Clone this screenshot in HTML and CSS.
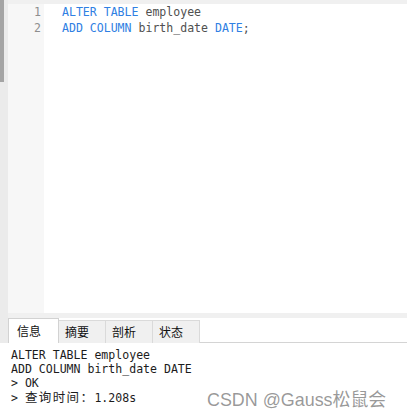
FILE: index.html
```html
<!DOCTYPE html>
<html>
<head>
<meta charset="utf-8">
<link rel="stylesheet" href="styles.css">
</head>
<body>
<div class="upper">
  <div class="vscroll"><div class="thumb"></div></div>
  <div class="pane">
    <div class="topband"></div>
    <div class="editor">
      <div class="gutter">
        <div class="ln">1</div>
        <div class="ln">2</div>
      </div>
      <div class="code">
        <div class="line"><span class="kw">ALTER TABLE</span> employee</div>
        <div class="line"><span class="kw">ADD COLUMN</span> birth_date <span class="kw">DATE</span>;</div>
      </div>
    </div>
    <div class="splitter"></div>
    <div class="tabs">
      <div class="tab active">信息</div>
      <div class="tab">摘要</div>
      <div class="tab">剖析</div>
      <div class="tab">状态</div>
    </div>
  </div>
</div>
<div class="output">
  <div class="oline">ALTER TABLE employee</div>
  <div class="oline">ADD COLUMN birth_date DATE</div>
  <div class="oline">&gt; OK</div>
  <div class="oline">&gt; <span class="cjk">查询时间：</span>1.208s</div>
</div>
<div class="watermark">CSDN @Gauss松鼠会</div>
</body>
</html>
```
FILE: styles.css
```css
html, body {
  margin: 0;
  padding: 0;
  background: #ffffff;
}
body {
  width: 407px;
  height: 419px;
  position: relative;
  overflow: hidden;
  font-family: "DejaVu Sans Mono", "Noto Sans CJK SC", monospace;
}
.upper {
  display: flex;
  height: 343px;
}
.vscroll {
  width: 8px;
  background: #ebebeb;
  flex: none;
}
.thumb {
  width: 4px;
  height: 82px;
  background: #a4a4a4;
}
.pane {
  flex: 1;
  display: flex;
  flex-direction: column;
}
.topband {
  height: 4px;
  background: #f0f0f0;
}
.editor {
  height: 309px;
  display: flex;
  background: #ffffff;
}
.gutter {
  width: 33px;
  padding-right: 3px;
  background: #f7f7f7;
  text-align: right;
  color: #8e8e8e;
  font-size: 11.55px;
  line-height: 16px;
}
.code {
  padding-left: 18px;
  font-size: 11.55px;
  line-height: 16px;
  color: #505050;
}
.line {
  white-space: pre;
}
.kw {
  color: #2f80e3;
}
.splitter {
  height: 5px;
  background: #f0f0f0;
}
.tabs {
  height: 24px;
  display: flex;
  align-items: flex-end;
  border-bottom: 1px solid #d4d4d4;
  background: #ffffff;
}
.tab {
  box-sizing: border-box;
  width: 47px;
  height: 23px;
  padding-left: 6px;
  background: #f0f0f0;
  border: 1px solid #dadada;
  border-bottom: none;
  border-left: none;
  font-family: "Noto Sans CJK SC", sans-serif;
  font-size: 12px;
  line-height: 21px;
  color: #111111;
  margin-bottom: -1px;
}
.tab.active {
  width: 51px;
  height: 25px;
  padding-left: 8px;
  background: #ffffff;
  border-left: 1px solid #d2d2d2;
  border-color: #d2d2d2;
  line-height: 24px;
}
.output {
  padding: 5px 0 0 11px;
  font-size: 11.55px;
  line-height: 14px;
  color: #1c1c1c;
}
.oline {
  white-space: pre;
}
.cjk {
  font-family: "Noto Sans CJK SC", sans-serif;
  font-size: 12.5px;
  letter-spacing: 1.4px;
}
.watermark {
  position: absolute;
  left: 207px;
  top: 390px;
  font-family: "Liberation Sans", "Noto Sans CJK SC", sans-serif;
  font-size: 17.9px;
  line-height: 20px;
  color: rgba(120, 120, 120, 0.75);
  white-space: nowrap;
}
```
